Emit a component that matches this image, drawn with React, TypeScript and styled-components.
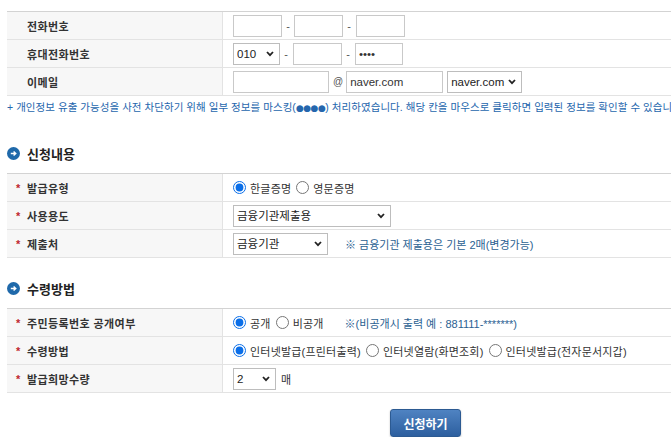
import React from "react";
import styled, { createGlobalStyle } from "styled-components";

const Global = createGlobalStyle`
  html, body { margin: 0; padding: 0; background: #fff; overflow: hidden; }
  body {
    font-family: "Liberation Sans", "Noto Sans CJK KR", sans-serif;
    font-size: 11px;
    color: #333;
  }
`;

const Page = styled.div`
  width: 837px;
  padding: 11px 0 0 7px;
`;

const Table = styled.div`
  border-top: 1px solid #d3d3d3;
`;

const Row = styled.div`
  display: grid;
  grid-template-columns: 216px 1fr;
  height: 28px;
  box-sizing: border-box;
  border-bottom: 1px solid #e3e3e3;
`;

const Label = styled.div<{ $req?: boolean }>`
  display: flex;
  align-items: center;
  box-sizing: border-box;
  padding-left: ${(p) => (p.$req ? 9 : 20)}px;
  background: #f7f7f7;
  border-right: 1px solid #e3e3e3;
  font-weight: bold;
  font-size: 11px;
  color: #333;
  letter-spacing: 0.4px;
`;

const Star = styled.span`
  width: 11px;
  color: #c0272d;
  font-size: 11px;
`;

const Value = styled.div`
  display: flex;
  align-items: center;
  padding-left: 10px;
  font-size: 11px;
  color: #333;
  white-space: nowrap;
`;

const TextInput = styled.input<{ $w: number }>`
  width: ${(p) => p.$w}px;
  height: 22px;
  box-sizing: border-box;
  border: 1px solid #c9c9c9;
  padding: 0 3px;
  font-family: "Liberation Sans", "Noto Sans CJK KR", sans-serif;
  font-size: 11.5px;
  color: #333;
  background: #fff;
  outline: none;
`;

const Dash = styled.span`
  width: 4px;
  margin: 0 4px;
  text-align: center;
  color: #555;
  font-size: 11px;
`;

const At = styled.span`
  margin: 0 3px 0 4px;
  color: #555;
  font-size: 10px;
`;

const SelectWrap = styled.span<{ $w: number; $ml?: number }>`
  position: relative;
  display: inline-flex;
  width: ${(p) => p.$w}px;
  height: 22px;
  margin-left: ${(p) => p.$ml ?? 0}px;
`;

const Select = styled.select`
  appearance: none;
  -webkit-appearance: none;
  width: 100%;
  height: 22px;
  box-sizing: border-box;
  border: 1px solid #bdbdbd;
  border-radius: 0;
  padding: 0 0 0 3px;
  background: #fff;
  font-family: "Liberation Sans", "Noto Sans CJK KR", sans-serif;
  font-size: 11.5px;
  color: #222;
  outline: none;
`;

const Chevron = styled.svg`
  position: absolute;
  right: 6px;
  top: 8px;
  pointer-events: none;
`;

const RadioLabel = styled.label`
  display: inline-flex;
  align-items: center;
  margin-right: 5px;
  font-size: 11px;
  color: #333;
  letter-spacing: 0.2px;
`;

const Radio = styled.input`
  width: 13px;
  height: 13px;
  margin: 0 4px 0 0;
  accent-color: #0a6ee8;
`;

const Note = styled.p`
  margin: 4px 0 0;
  line-height: 14px;
  font-size: 10.5px;
  letter-spacing: 0.05px;
  color: #2566ad;
  white-space: nowrap;
`;

const Dots = styled.span`
  font-family: "DejaVu Sans", sans-serif;
  font-size: 9px;
  letter-spacing: -0.5px;
`;

const SubNote = styled.span<{ $ml: number }>`
  margin-left: ${(p) => p.$ml}px;
  font-size: 11px;
  color: #2b6192;
`;

const SectionTitle = styled.h3<{ $mt: number }>`
  display: flex;
  align-items: center;
  gap: 7px;
  height: 20px;
  margin: ${(p) => p.$mt}px 0 10px;
  font-size: 13px;
  font-weight: bold;
  color: #222;
`;

const Unit = styled.span`
  margin-left: 5px;
  font-size: 11px;
  color: #333;
`;

const ButtonBar = styled.div`
  display: flex;
  justify-content: center;
  margin-top: 16px;
`;

const SubmitButton = styled.button`
  width: 71px;
  height: 28px;
  border: 1px solid #2c5a92;
  border-radius: 3px;
  background: linear-gradient(#4f83c2, #2d5f9f);
  box-shadow: 0 1px 2px rgba(0, 0, 0, 0.25);
  color: #fff;
  font-family: "Liberation Sans", "Noto Sans CJK KR", sans-serif;
  font-size: 12px;
  font-weight: bold;
  cursor: pointer;
`;

const ChevronIcon = () => (
  <Chevron width="8" height="6" viewBox="0 0 8 6">
    <path d="M1 1 L4 4.2 L7 1" stroke="#222" strokeWidth="1.8" fill="none" />
  </Chevron>
);

const DropDown = ({ w, value, ml }: { w: number; value: string; ml?: number }) => (
  <SelectWrap $w={w} $ml={ml}>
    <Select defaultValue={value}>
      <option>{value}</option>
    </Select>
    <ChevronIcon />
  </SelectWrap>
);

const BulletIcon = () => (
  <svg width="13" height="13" viewBox="0 0 13 13">
    <circle cx="6.5" cy="6.5" r="6.5" fill="#1f69aa" />
    <path d="M3.8 6.5 H8.6 M6.6 4.4 L8.8 6.5 L6.6 8.6" stroke="#fff" strokeWidth="1.4" fill="none" />
  </svg>
);

const Opt = ({ name, label, checked }: { name: string; label: string; checked?: boolean }) => (
  <RadioLabel>
    <Radio type="radio" name={name} defaultChecked={checked} />
    {label}
  </RadioLabel>
);

export default function App() {
  return (
    <>
      <Global />
      <Page>
        <Table>
          <Row>
            <Label>전화번호</Label>
            <Value>
              <TextInput $w={49} />
              <Dash>-</Dash>
              <TextInput $w={49} />
              <Dash>-</Dash>
              <TextInput $w={49} style={{ marginLeft: 1 }} />
            </Value>
          </Row>
          <Row>
            <Label>휴대전화번호</Label>
            <Value>
              <DropDown w={47} value="010" />
              <Dash style={{ marginRight: 5 }}>-</Dash>
              <TextInput $w={49} />
              <Dash style={{ marginRight: 5 }}>-</Dash>
              <TextInput $w={48} type="password" defaultValue="1234" />
            </Value>
          </Row>
          <Row>
            <Label>이메일</Label>
            <Value>
              <TextInput $w={96} />
              <At>@</At>
              <TextInput $w={97} defaultValue="naver.com" />
              <DropDown w={75} value="naver.com" ml={4} />
            </Value>
          </Row>
        </Table>
        <Note>
          + 개인정보 유출 가능성을 사전 차단하기 위해 일부 정보를 마스킹(<Dots>●●●●</Dots>) 처리하였습니다. 해당 칸을 마우스로 클릭하면 입력된 정보를 확인할 수 있습니다.
        </Note>

        <SectionTitle $mt={28}>
          <BulletIcon />
          신청내용
        </SectionTitle>
        <Table>
          <Row>
            <Label $req><Star>*</Star>발급유형</Label>
            <Value>
              <Opt name="type" label="한글증명" checked />
              <Opt name="type" label="영문증명" />
            </Value>
          </Row>
          <Row>
            <Label $req><Star>*</Star>사용용도</Label>
            <Value>
              <DropDown w={158} value="금융기관제출용" />
            </Value>
          </Row>
          <Row>
            <Label $req><Star>*</Star>제출처</Label>
            <Value>
              <DropDown w={95} value="금융기관" />
              <SubNote $ml={17}>※ 금융기관 제출용은 기본 2매(변경가능)</SubNote>
            </Value>
          </Row>
        </Table>

        <SectionTitle $mt={20}>
          <BulletIcon />
          수령방법
        </SectionTitle>
        <Table>
          <Row>
            <Label $req><Star>*</Star>주민등록번호 공개여부</Label>
            <Value>
              <Opt name="open" label="공개" checked />
              <Opt name="open" label="비공개" />
              <SubNote $ml={16}>※(비공개시 출력 예 : 881111-*******)</SubNote>
            </Value>
          </Row>
          <Row>
            <Label $req><Star>*</Star>수령방법</Label>
            <Value>
              <Opt name="recv" label="인터넷발급(프린터출력)" checked />
              <Opt name="recv" label="인터넷열람(화면조회)" />
              <Opt name="recv" label="인터넷발급(전자문서지갑)" />
            </Value>
          </Row>
          <Row>
            <Label $req><Star>*</Star>발급희망수량</Label>
            <Value>
              <DropDown w={43} value="2" />
              <Unit>매</Unit>
            </Value>
          </Row>
        </Table>

        <ButtonBar>
          <SubmitButton type="button">신청하기</SubmitButton>
        </ButtonBar>
      </Page>
    </>
  );
}
